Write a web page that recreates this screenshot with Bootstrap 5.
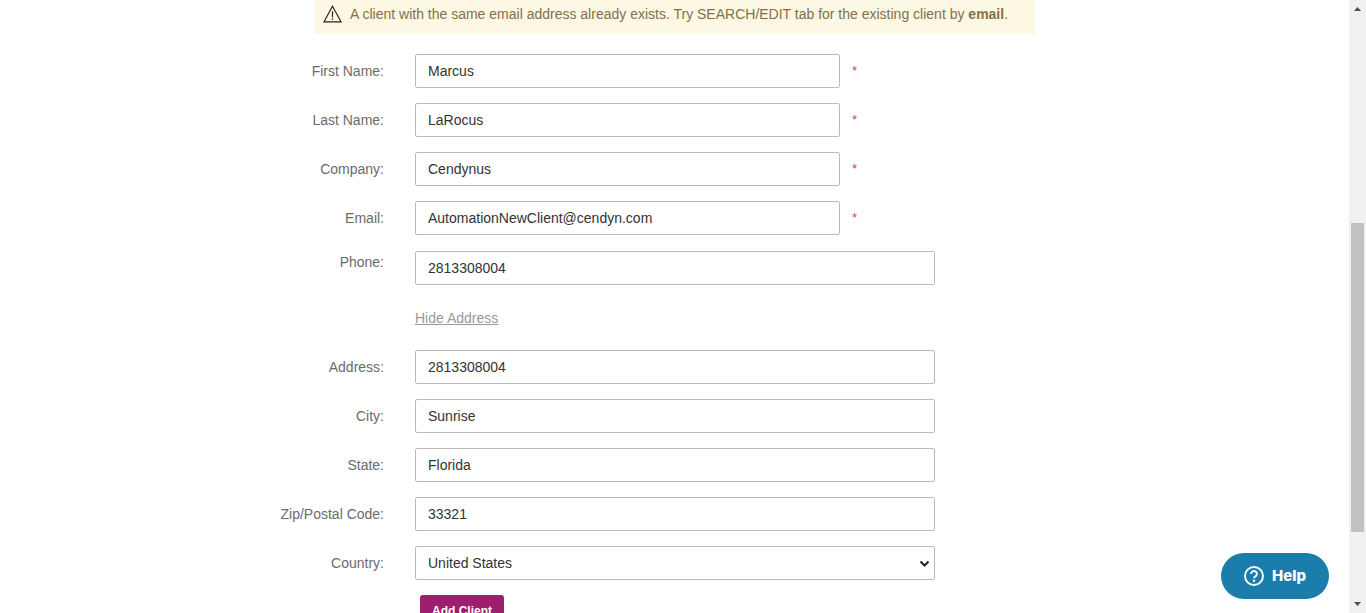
<!DOCTYPE html>
<html lang="en">
<head>
<meta charset="utf-8">
<meta name="viewport" content="width=device-width, initial-scale=1">
<title>Add Client</title>
<link href="https://cdn.jsdelivr.net/npm/bootstrap@5.3.0/dist/css/bootstrap.min.css" rel="stylesheet">
<style>
  body { font-family: "Liberation Sans", Arial, sans-serif; font-size: 14px; line-height: 20px; color: #6b6b6b; background: #fff; }
  .client-shell { max-width: 819px; }
  .notice { width: 720px; max-width: 100%; margin-left: 50px; padding: 4px 8px 10px; background: #fcf8e3; color: #85704a; }
  .client-form { display: grid; gap: 15px; margin-top: 20px; }
  .field { display: grid; grid-template-columns: 119px minmax(0, 520px); column-gap: 31px; align-items: center; }
  .field label { text-align: right; }
  .field .form-control, .field .form-select { height: 34px; padding: 6px 12px; font-size: 14px; line-height: 20px; color: #333; border: 1px solid #bbb; border-radius: 2px; background-color: #fff; }
  .field .form-select { background-position: right 4px center; background-size: 11px 11px; background-image: url("data:image/svg+xml,%3Csvg xmlns='http://www.w3.org/2000/svg' viewBox='0 0 11 11'%3E%3Cpath d='M1.5 3.5l4 4 4-4' fill='none' stroke='%23222' stroke-width='2'/%3E%3C/svg%3E"); }
  .required-input { width: 425px; }
  .star { color: #c74b52; margin-left: 12px; font-size: 13px; }
  .phone-field { margin-top: 1px; }
  .phone-field label { padding-top: 1px; }
  .toggle-row { padding: 8px 0 7px 150px; }
  .toggle-row a { color: #999; }
  .submit-row { padding-left: 155px; }
  .btn-client { background: #9f1f6f; color: #fff; font-size: 12px; font-weight: 700; line-height: 20px; padding: 6px 12px; border: 0; border-radius: 3px; }
  .help-btn { right: 37px; bottom: 14px; height: 46px; padding: 0 23px; background: #1a7dab; color: #fff; font-family: Inter, sans-serif; font-size: 15px; font-weight: 800; border: 0; }
  .scroll-rail { width: 17px; background: #f1f1f1; padding: 7px 2px; }
  .scroll-thumb { width: 13px; background: #c1c1c1; }
</style>
</head>
<body>
<div class="d-flex vh-100 overflow-hidden">
  <main class="flex-grow-1 overflow-hidden">
    <div class="client-shell mx-auto">
      <div class="notice d-flex align-items-center" role="alert">
        <svg class="flex-shrink-0 me-2" width="19" height="18" viewBox="0 0 19 18" fill="none" stroke="#222" stroke-width="1.2" aria-hidden="true"><path d="M9.5 1.2 18 16.8H1z"/><path d="M9.5 6.2v6M9.5 13.2v1.6"/></svg>
        <span>A client with the same email address already exists. Try SEARCH/EDIT tab for the existing client by <strong>email</strong>.</span>
      </div>
      <form class="client-form">
        <div class="field"><label for="first">First Name:</label><div class="d-flex align-items-center"><input class="form-control required-input" id="first" type="text" value="Marcus"><span class="star">*</span></div></div>
        <div class="field"><label for="last">Last Name:</label><div class="d-flex align-items-center"><input class="form-control required-input" id="last" type="text" value="LaRocus"><span class="star">*</span></div></div>
        <div class="field"><label for="company">Company:</label><div class="d-flex align-items-center"><input class="form-control required-input" id="company" type="text" value="Cendynus"><span class="star">*</span></div></div>
        <div class="field"><label for="email">Email:</label><div class="d-flex align-items-center"><input class="form-control required-input" id="email" type="email" value="AutomationNewClient@cendyn.com"><span class="star">*</span></div></div>
        <div class="field phone-field"><label class="align-self-start" for="phone">Phone:</label><input class="form-control" id="phone" type="tel" value="2813308004"></div>
        <div class="toggle-row"><a href="#address">Hide Address</a></div>
        <div class="field"><label for="address">Address:</label><input class="form-control" id="address" type="text" value="2813308004"></div>
        <div class="field"><label for="city">City:</label><input class="form-control" id="city" type="text" value="Sunrise"></div>
        <div class="field"><label for="state">State:</label><input class="form-control" id="state" type="text" value="Florida"></div>
        <div class="field"><label for="zip">Zip/Postal Code:</label><input class="form-control" id="zip" type="text" value="33321"></div>
        <div class="field"><label for="country">Country:</label><select class="form-select" id="country"><option selected>United States</option></select></div>
        <div class="submit-row"><button class="btn btn-client" type="submit">Add Client</button></div>
      </form>
    </div>
  </main>
  <div class="scroll-rail d-flex flex-column align-items-center flex-shrink-0" aria-hidden="true">
    <svg width="7" height="4" viewBox="0 0 7 4"><path d="M0 4 3.5 0 7 4z" fill="#505050"/></svg>
    <div style="flex: 212"></div>
    <div class="scroll-thumb" style="flex: 309"></div>
    <div style="flex: 70"></div>
    <svg width="7" height="4" viewBox="0 0 7 4"><path d="M0 0h7L3.5 4z" fill="#505050"/></svg>
  </div>
</div>
<button class="help-btn position-fixed rounded-pill d-flex align-items-center gap-2" type="button">
  <svg width="20" height="20" viewBox="0 0 20 20" fill="none" stroke="#fff" stroke-width="1.9" aria-hidden="true"><circle cx="10" cy="10" r="9"/><path d="M7.1 8a2.9 2.9 0 1 1 4.5 2.3c-1.1.7-1.6 1.1-1.6 2"/><circle cx="10" cy="14.7" r="1.2" fill="#fff" stroke="none"/></svg>
  <span>Help</span>
</button>
<script src="https://cdn.jsdelivr.net/npm/bootstrap@5.3.0/dist/js/bootstrap.bundle.min.js"></script>
</body>
</html>
